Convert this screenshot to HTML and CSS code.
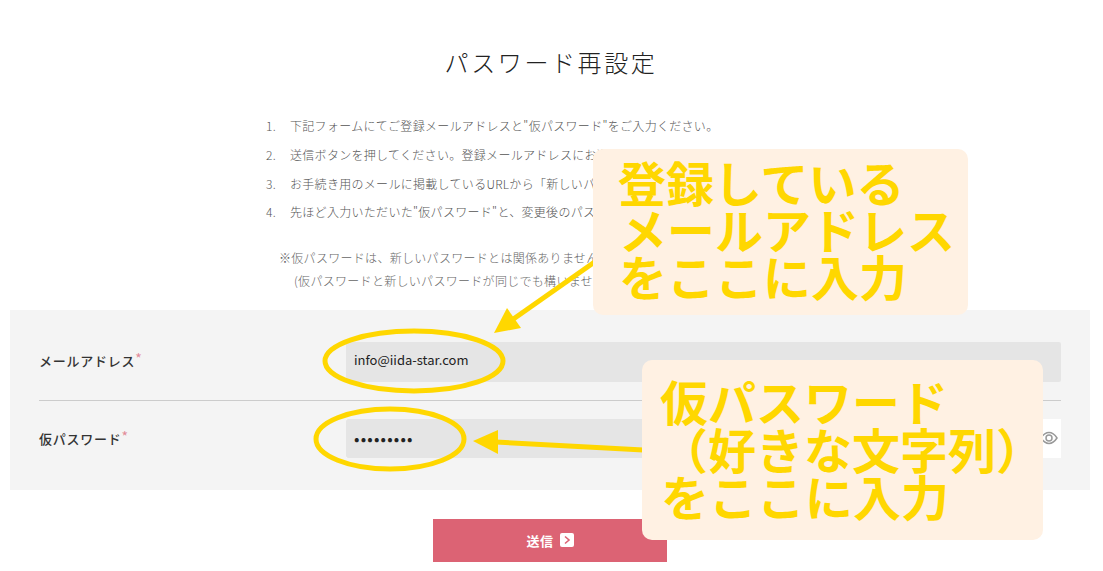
FILE: index.html
```html
<!DOCTYPE html>
<html lang="ja">
<head>
<meta charset="utf-8">
<title>パスワード再設定</title>
<link rel="stylesheet" href="styles.css">
</head>
<body>
<main class="page">
  <h1 class="title">パスワード再設定</h1>
  <ol class="steps">
    <li>下記フォームにてご登録メールアドレスと"仮パスワード"をご入力ください。</li>
    <li>送信ボタンを押してください。登録メールアドレスにお送りします。</li>
    <li>お手続き用のメールに掲載しているURLから「新しいパスワード」へ。</li>
    <li>先ほど入力いただいた"仮パスワード"と、変更後のパスワードを入力。</li>
  </ol>
  <div class="notes">
    <p>※仮パスワードは、新しいパスワードとは関係ありません。</p>
    <p class="notes-sub">(仮パスワードと新しいパスワードが同じでも構いません)</p>
  </div>
  <form class="panel">
    <div class="row row-first">
      <label class="label" for="mail">メールアドレス<span class="req">*</span></label>
      <input class="field" id="mail" type="text" value="info@iida-star.com">
    </div>
    <div class="row row-last">
      <label class="label" for="pass">仮パスワード<span class="req">*</span></label>
      <div class="pass-wrap">
        <input class="field field-pass" id="pass" type="password" value="123456789">
        <span class="eye">
          <svg width="18" height="14" viewBox="0 0 18 14" aria-hidden="true"><path d="M1 7C3.5 3.2 6 1.6 9 1.6S14.500 3.200 17 7C14.500 10.800 12 12.400 9 12.400S3.500 10.800 1 7Z" fill="none" stroke="#999" stroke-width="1.500"/><circle cx="9" cy="7" r="3" fill="none" stroke="#999" stroke-width="1.500"/></svg>
        </span>
      </div>
    </div>
  </form>
  <div class="actions">
    <button class="submit" type="button">送信<span class="submit-icon"><svg width="14" height="14" viewBox="0 0 14 14" aria-hidden="true"><path d="M5 3.500L9 7L5 10.500" fill="none" stroke="#dc6374" stroke-width="1.600"/></svg></span></button>
  </div>
</main>

<svg class="marks" width="1103" height="571" viewBox="0 0 1103 571" aria-hidden="true">
  <ellipse cx="414" cy="361" rx="89" ry="30" class="ring"/>
  <ellipse cx="390" cy="439" rx="74" ry="30" class="ring"/>
  <path d="M606 254L512 320" class="shaft"/>
  <path d="M494 333L507 308L521 328Z" class="head"/>
  <path d="M496 442L662 451" class="shaft"/>
  <path d="M473 441L498 430L498 454Z" class="head"/>
</svg>

<aside class="callout callout-mail">登録している<br><span class="nudge">メールアドレス</span><br><span class="nudge">をここに入力</span></aside>
<aside class="callout callout-pass">仮パスワード<br>（好きな文字列）<br><span class="nudge">をここに入力</span></aside>
</body>
</html>
```

FILE: styles.css
```css
* { box-sizing: border-box; }
html, body { margin: 0; padding: 0; background: #fff; }
body {
  font-family: "Noto Sans CJK JP", "Noto Sans", sans-serif;
  color: #333;
  height: 571px;
  overflow: hidden;
  position: relative;
}
.page { width: 1100px; }
.title {
  margin: 0;
  padding: 44px 0 0 2px;
  font-size: 24px;
  line-height: 35px;
  font-weight: 300;
  letter-spacing: 2.600px;
  text-align: center;
  color: #222;
}
.steps {
  list-style: none;
  counter-reset: step;
  margin: 33px 0 0;
  padding: 0 0 0 266px;
  font-size: 12px;
  line-height: 28.800px;
  font-weight: 300;
  letter-spacing: .3px;
  color: #555;
}
.steps li { counter-increment: step; white-space: nowrap; }
.steps li::before {
  content: counter(step) ".";
  display: inline-block;
  width: 24px;
}
.notes {
  margin-top: 19px;
  padding-left: 279px;
  font-size: 12px;
  line-height: 23px;
  font-weight: 300;
  letter-spacing: .3px;
  color: #666;
  white-space: nowrap;
}
.notes p { margin: 0; }
.notes-sub { padding-left: 15px; }
.panel {
  margin: 18px 10px 0;
  padding: 0 29px;
  height: 180px;
  background: #f4f4f4;
}
.row { display: flex; align-items: center; }
.row-first { padding: 32px 0 18px; border-bottom: 1px solid #ccc; }
.row-first .label { padding-bottom: 6px; }
.row-last { padding-top: 18px; }
.row-last .label { padding-bottom: 3px; }
.label {
  flex: 0 0 307px;
  font-size: 13px;
  font-weight: 500;
  letter-spacing: .75px;
  color: #333;
}
.req { color: #e28b98; font-weight: 400; font-size: 14px; vertical-align: 2px; }
.field {
  flex: 1;
  height: 40px;
  border: 0;
  border-radius: 2px;
  padding: 0 8px 5px;
  background: #e5e5e5;
  font: 400 13px "Noto Sans CJK JP", "Noto Sans", sans-serif;
  color: #222;
  min-width: 0;
}
.pass-wrap { flex: 1; display: flex; height: 39px; background: #fff; }
.field-pass {
  height: 39px;
  border-radius: 2px 0 0 2px;
  padding: 0 8px 1px 8px;
  font-size: 16px;
  letter-spacing: 1.200px;
}
.eye { flex: 0 0 28px; display: flex; align-items: center; justify-content: flex-end; padding: 0 3px 2px 0; }
.actions { display: flex; justify-content: center; margin-top: 29px; }
.submit {
  width: 234px;
  height: 43px;
  border: 0;
  background: #dc6374;
  color: #fff;
  font: 700 13px "Noto Sans CJK JP", "Noto Sans", sans-serif;
  letter-spacing: .5px;
  display: flex;
  align-items: center;
  justify-content: center;
  gap: 6px;
  padding: 0 0 1px;
}
.submit-icon { width: 14px; height: 14px; background: #fff; border-radius: 2px; display: block; }
.submit-icon svg { display: block; }
.marks { position: absolute; left: 0; top: 0; pointer-events: none; }
.ring { fill: none; stroke: #ffd700; stroke-width: 5; }
.shaft { fill: none; stroke: #ffd700; stroke-width: 5; }
.head { fill: #ffd700; }
.callout {
  position: absolute;
  background: #fff1e3;
  border-radius: 10px;
  color: #ffd700;
  font-weight: 700;
  font-size: 48px;
  white-space: nowrap;
}
.nudge { margin-left: 1px; }
.callout-mail { left: 593px; top: 149px; width: 375px; height: 166px; padding: 9px 0 0 25px; line-height: 47px; }
.callout-pass { left: 642px; top: 360px; width: 401px; height: 180px; padding: 17px 0 0 18px; line-height: 47.500px; }
```
